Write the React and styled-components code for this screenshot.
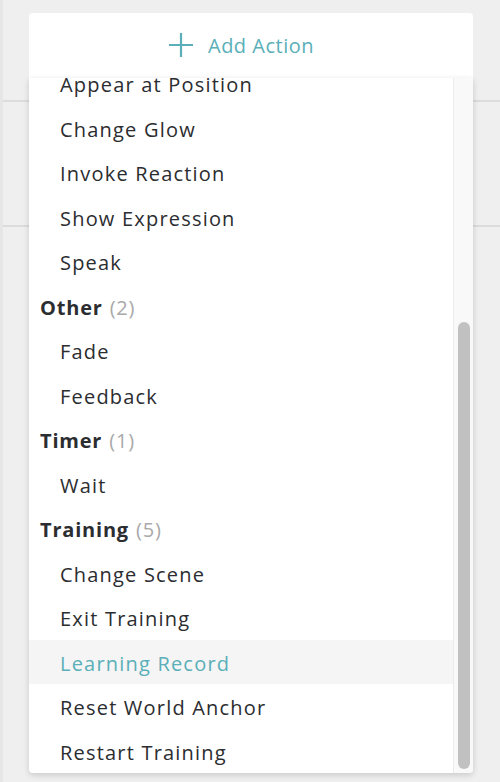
import React, { useLayoutEffect, useRef, useState } from "react";
import styled, { createGlobalStyle } from "styled-components";

const Global = createGlobalStyle`
  html, body { margin: 0; padding: 0; }
  body { background: #efefef; font-family: "Open Sans", "Liberation Sans", sans-serif; }
`;

const Page = styled.div`
  position: relative;
  height: 782px;
  width: 500px;
  overflow: hidden;
  background: #efefef;
  box-sizing: border-box;
  border-left: 3px solid #e6e6e6;
`;

const BgRow = styled.div`
  height: ${(p) => p.$h}px;
  border-bottom: 2px solid #dcdcdc;
  box-sizing: border-box;
`;

const Menu = styled.div`
  position: absolute;
  left: 26px;
  top: 13px;
  width: 444px;
  display: flex;
  flex-direction: column;
`;

const AddButton = styled.button`
  height: 65px;
  border: none;
  background: #fff;
  border-radius: 4px 4px 0 0;
  display: flex;
  align-items: center;
  justify-content: center;
  gap: 14px;
  padding: 0 20px 1px 0;
  color: #5aafb8;
  font-family: "Open Sans", "Liberation Sans", sans-serif;
  font-size: 20px;
  letter-spacing: 0.5px;
  cursor: pointer;
`;

const Dropdown = styled.div`
  height: 695px;
  display: flex;
  background: #fff;
  border-radius: 0 0 4px 4px;
  box-shadow: 0 2px 6px rgba(0, 0, 0, 0.16);
  overflow: hidden;
`;

const List = styled.div`
  flex: 1;
  overflow: hidden;
`;

const Track = styled.div`
  width: 20px;
  box-sizing: border-box;
  background: #f9f9f9;
  border-left: 1px solid #ebebeb;
  padding: 4px 3px 4px 4px;
`;

const Thumb = styled.div`
  width: 12px;
  background: #c1c1c1;
  border-radius: 6px;
`;

const Heading = styled.div`
  height: 44.5px;
  box-sizing: border-box;
  padding-top: 3px;
  display: flex;
  align-items: center;
  padding-left: 11px;
  font-size: 20px;
  font-weight: 700;
  letter-spacing: 0.8px;
  color: #2b2d30;
`;

const Count = styled.span`
  font-weight: 400;
  color: #a9a9a9;
  margin-left: 7px;
`;

const Item = styled.div`
  height: 44.5px;
  box-sizing: border-box;
  padding-top: 3px;
  display: flex;
  align-items: center;
  padding-left: 31px;
  font-size: 20px;
  letter-spacing: 1.2px;
  color: ${(p) => (p.$active ? "#5aafb8" : "#2b2d30")};
  background: ${(p) => (p.$active ? "#f5f5f5" : "transparent")};
`;

const groups = [
  { name: "Audio", items: ["Play Music", "Play Sound", "Stop Sound"] },
  {
    name: "Character",
    items: [
      "Animate",
      "Appear",
      "Appear and Move",
      "Appear at Position",
      "Change Glow",
      "Invoke Reaction",
      "Show Expression",
      "Speak",
    ],
  },
  { name: "Other", items: ["Fade", "Feedback"] },
  { name: "Timer", items: ["Wait"] },
  {
    name: "Training",
    items: [
      "Change Scene",
      "Exit Training",
      "Learning Record",
      "Reset World Anchor",
      "Restart Training",
    ],
  },
];

const PlusIcon = () => (
  <svg width="26" height="26" viewBox="0 0 26 26" fill="none">
    <path d="M13 1v24M1 13h24" stroke="#5aafb8" strokeWidth="2.2" />
  </svg>
);

export default function App() {
  const ref = useRef(null);
  const [thumb, setThumb] = useState({ top: 0, height: 0 });
  useLayoutEffect(() => {
    const el = ref.current;
    if (!el) return;
    el.scrollTop = el.scrollHeight;
    const track = el.clientHeight - 8;
    const h = (track * el.clientHeight) / el.scrollHeight;
    const top = (el.scrollTop / (el.scrollHeight - el.clientHeight)) * (track - h);
    setThumb({ top, height: h });
  }, []);
  return (
    <>
      <Global />
      <Page>
        <BgRow $h={102} />
        <BgRow $h={125} />
        <Menu>
          <AddButton>
            <PlusIcon />
            Add Action
          </AddButton>
          <Dropdown>
            <List ref={ref}>
              {groups.map((g) => (
                <React.Fragment key={g.name}>
                  <Heading>
                    {g.name}
                    <Count>({g.items.length})</Count>
                  </Heading>
                  {g.items.map((it) => (
                    <Item key={it} $active={it === "Learning Record"}>
                      {it}
                    </Item>
                  ))}
                </React.Fragment>
              ))}
            </List>
            <Track>
              <Thumb style={{ marginTop: thumb.top, height: thumb.height }} />
            </Track>
          </Dropdown>
        </Menu>
      </Page>
    </>
  );
}
